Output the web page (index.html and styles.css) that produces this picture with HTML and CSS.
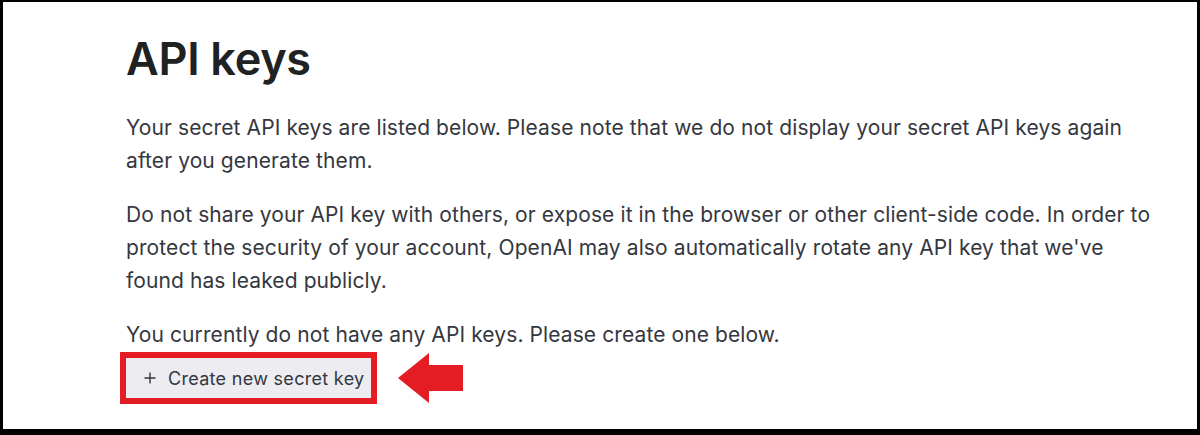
FILE: index.html
```html
<!DOCTYPE html>
<html lang="en">
    <head>
        <meta charset="UTF-8">
        <meta name="viewport" content="width=device-width, initial-scale=1.0">
        <title>API keys</title>
        <link rel="stylesheet" href="styles.css">
    </head>

    <body>

        <!-- API keys -->

        <main class="page">
            <h1 class="title">API keys</h1>

            <p class="text">Your secret API keys are listed below. Please note that we do not display your secret API keys again after you generate them.</p>

            <p class="text">Do not share your API key with others, or expose it in the browser or other client-side code. In order to protect the security of your account, OpenAI may also automatically rotate any API key that we've found has leaked publicly.</p>

            <p class="text text-last">You currently do not have any API keys. Please create one below.</p>

            <!-- Кнопка + стрелка -->

            <div class="actions">
                <button class="create-btn" type="button">
                    <svg class="plus" viewBox="0 0 12 12" width="12" height="12">
                        <path d="M6 0.5v11M0.5 6h11" stroke="currentColor" stroke-width="1.4" fill="none"/>
                    </svg>
                    <span>Create new secret key</span>
                </button>

                <svg class="arrow" viewBox="0 0 65 50" width="65" height="50">
                    <polygon points="0,25 31,0 31,12 65,12 65,38 31,38 31,50" fill="#e41c24"/>
                </svg>
            </div>
        </main>

    </body>

</html>
```

FILE: styles.css
```css
* {
    box-sizing: border-box;
}

body {
    margin: 0;
    height: 435px;
    background: #fff;
    border-style: solid;
    border-color: #000;
    border-width: 2px 3px 6px 3px;
    font-family: "Inter", "Noto Sans", sans-serif;
    overflow: hidden;
}

/* Контент */

.page {
    padding: 30px 30px 0 123px;
}

.title {
    margin: 0 0 25px;
    font-size: 45px;
    line-height: 54px;
    font-weight: 600;
    letter-spacing: -0.3px;
    color: #202123;
}

.text {
    margin: 0 0 21px;
    font-size: 21px;
    line-height: 33px;
    letter-spacing: 0.1px;
    color: #353740;
}

.text-last {
    margin-bottom: 2px;
}

/* Кнопка */

.actions {
    display: flex;
    align-items: center;
    gap: 27px;
}

.create-btn {
    display: flex;
    align-items: center;
    gap: 12px;
    width: 245px;
    height: 40px;
    padding: 0 6px 0 18px;
    border: none;
    border-radius: 0;
    background: #ececf1;
    outline: 6px solid #e41c24;
    font-family: inherit;
    font-size: 18px;
    letter-spacing: 0.3px;
    color: #353740;
    white-space: nowrap;
}

.plus {
    flex: none;
}

.arrow {
    flex: none;
}
```
